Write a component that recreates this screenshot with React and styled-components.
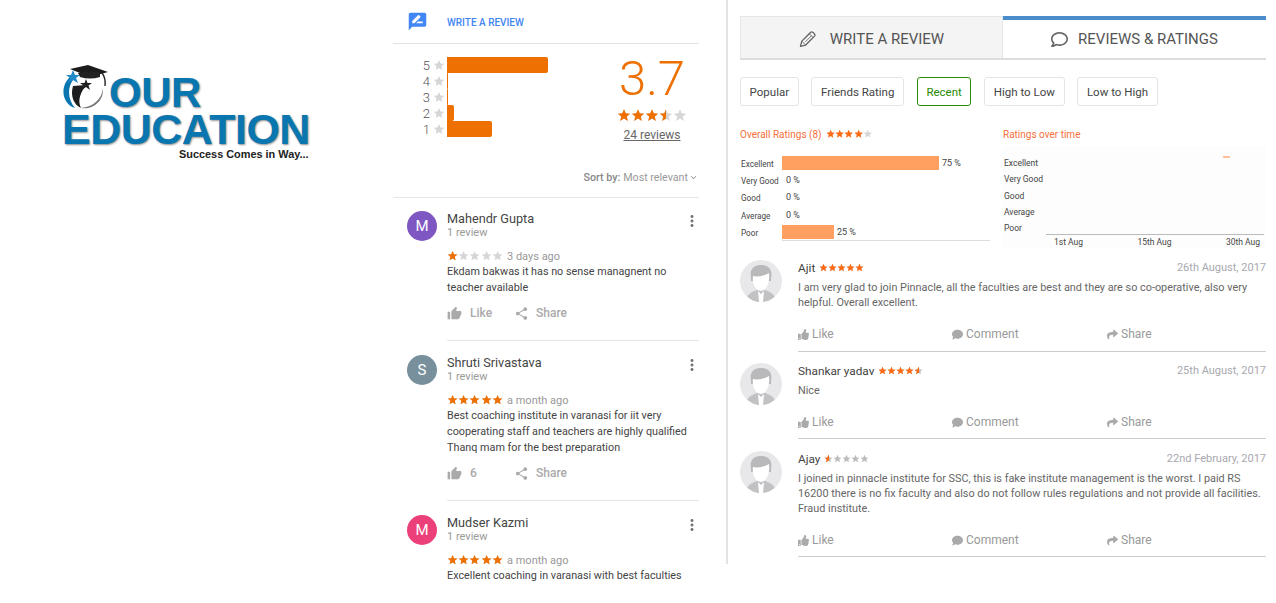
import React from "react";
import styled, { createGlobalStyle } from "styled-components";
import { MdRateReview, MdThumbUp, MdShare, MdMoreVert, MdExpandMore } from "react-icons/md";
import { FaThumbsUp, FaComment, FaShare, FaRegComment } from "react-icons/fa";

const GlobalStyle = createGlobalStyle`
  html, body {
    margin: 0;
    padding: 0;
    background: #fff;
    font-family: Roboto, "Liberation Sans", sans-serif;
    overflow: hidden;
  }
`;

const Page = styled.div`
  display: flex;
  align-items: flex-start;
  width: 1276px;
  height: 603px;
  overflow: hidden;
`;

// logo column
const LogoColumn = styled.div`
  width: 331px;
  padding: 64px 0 0 62px;
  flex-shrink: 0;
`;

const LogoTop = styled.div`
  display: flex;
  align-items: flex-end;
  height: 46px;
`;

const LogoWord = styled.div`
  font-family: "Liberation Sans", sans-serif;
  font-weight: 700;
  color: #0a76b0;
  line-height: ${(p) => p.$lh}px;
  font-size: ${(p) => p.$size}px;
  letter-spacing: ${(p) => p.$spacing}px;
  text-shadow: 1px 1px 2px rgba(0, 0, 0, 0.45);
`;

const LogoTag = styled.div`
  font-family: "Liberation Sans", sans-serif;
  font-weight: 700;
  font-size: 10.9px;
  line-height: 12px;
  color: #222;
  margin: 0 0 0 117px;
  white-space: nowrap;
`;

const LogoMark = () => (
  <svg width="47" height="46" viewBox="0 0 47 46">
    <path d="M8 5 L26 1 L46 8 L28 13 Z" fill="#1c1c1c" />
    <path d="M16 9 Q28 6 38 9 L38 13 Q28 16 18 13 Z" fill="#222" />
    <path d="M40 9 Q44 14 43 22" stroke="#222" strokeWidth="1.4" fill="none" />
    <path d="M9 12 C-3 22 0 40 13 44 C6 36 5 24 11 16 Z" fill="#0a76b0" />
    <path d="M11 22 C8 32 12 41 19 44 C15 36 19 28 24 21 Z" fill="#1d1d1d" />
    <path d="M19 44 C30 46 42 38 41 24 C40 35 31 43 19 44 Z" fill="#777" />
    <path d="M11 6 L13 11 L18 11 L14 14 L16 19 L11 16 L6 19 L8 14 L4 11 L9 11 Z" fill="#1f8ac8" />
    <path d="M24 15 L25.5 19 L30 19 L26.5 21.5 L28 26 L24 23 L20 26 L21.5 21.5 L18 19 L22.500 19 Z" fill="#222" />
  </svg>
);

// google reviews column
const GoogleColumn = styled.div`
  width: 306px;
  flex-shrink: 0;
`;

const WriteBar = styled.div`
  display: flex;
  align-items: center;
  height: 43px;
  border-bottom: 1px solid #e2e2e2;
  padding-left: 14px;
  gap: 19px;
  color: #4285f4;
  font-size: 10px;
  font-weight: 500;
  svg {
    margin-top: -1px;
  }
  span {
    padding-top: 2px;
  }
`;

const Summary = styled.div`
  height: 154px;
  border-bottom: 1px solid #e6e6e6;
  display: flex;
  flex-direction: column;
  padding-top: 13px;
  box-sizing: border-box;
`;

const SummaryTop = styled.div`
  display: flex;
  justify-content: space-between;
  padding-right: 12px;
`;

const Histogram = styled.div`
  display: flex;
  flex-direction: column;
`;

const HistRow = styled.div`
  display: flex;
  align-items: center;
  height: 16px;
`;

const HistNum = styled.span`
  width: 37px;
  text-align: right;
  font-size: 13px;
  color: #555;
  font-weight: 300;
`;

const HistStar = styled.span`
  display: flex;
  width: 17px;
  justify-content: center;
`;

const HistBar = styled.div`
  height: 16px;
  background: #ed7000;
  border-radius: 0 2px 2px 0;
`;

const Score = styled.div`
  display: flex;
  flex-direction: column;
  align-items: center;
  width: 70px;
`;

const ScoreNum = styled.div`
  font-size: 49px;
  line-height: 44px;
  font-weight: 300;
  color: #ed7000;
`;

const ScoreLink = styled.div`
  font-size: 12px;
  line-height: 14px;
  color: #666;
  text-decoration: underline;
  margin-top: 7px;
`;

const ScoreStars = styled.div`
  margin-top: 6px;
  height: 14px;
`;

const SortRow = styled.div`
  margin-top: auto;
  margin-bottom: 13px;
  display: flex;
  align-items: center;
  justify-content: flex-end;
  font-size: 10.7px;
  color: #999;
  white-space: nowrap;
  b {
    font-weight: 500;
    color: #888;
    margin-right: 3px;
  }
`;

const GList = styled.div`
  margin-top: -1px;
`;

const GItem = styled.div`
  display: flex;
  padding: 14px 0 0 14px;
  gap: 10px;
`;

const GAvatar = styled.div`
  width: 30px;
  height: 30px;
  border-radius: 50%;
  background: ${(p) => p.$bg};
  color: #fff;
  font-size: 15px;
  display: flex;
  align-items: center;
  justify-content: center;
  flex-shrink: 0;
`;

const GBody = styled.div`
  flex: 1;
  padding-bottom: 17px;
  border-bottom: ${(p) => (p.$last ? "none" : "1px solid #e6e6e6")};
`;

const GHead = styled.div`
  display: flex;
  justify-content: space-between;
`;

const GName = styled.div`
  font-size: 12.7px;
  line-height: 15px;
  color: #444;
`;

const GSub = styled.div`
  font-size: 11px;
  line-height: 13px;
  color: #999;
`;

const GMeta = styled.div`
  display: flex;
  align-items: center;
  gap: 4px;
  margin-top: 10px;
  height: 14px;
  font-size: 11px;
  color: #999;
`;

const GText = styled.div`
  font-size: 10.8px;
  line-height: 16px;
  color: #444;
  margin-top: 1px;
`;

const GActions = styled.div`
  display: flex;
  align-items: center;
  height: 20px;
  margin-top: 7px;
  font-size: 12px;
  font-weight: 500;
  color: #aaa;
`;

const GAction = styled.span`
  display: flex;
  align-items: center;
  gap: ${(p) => p.$gap}px;
  width: ${(p) => p.$w}px;
`;

const DotsButton = styled.span`
  display: flex;
  margin: 1px -2px 0 0;
  color: #757575;
`;

const Rule = styled.div`
  width: 2px;
  height: 564px;
  margin-left: 27px;
  background: #e2e2e2;
  flex-shrink: 0;
`;

// right column
const RightColumn = styled.div`
  width: 526px;
  margin: 16px 0 0 12px;
  flex-shrink: 0;
`;

const Tabs = styled.div`
  display: flex;
  height: 44px;
  border-bottom: 2px solid #ddd;
  box-sizing: border-box;
`;

const Tab = styled.div`
  width: 263px;
  display: flex;
  align-items: center;
  justify-content: center;
  gap: ${(p) => (p.$active ? 10 : 14)}px;
  font-size: 15px;
  color: #555;
  box-sizing: border-box;
  padding-top: ${(p) => (p.$active ? 0 : 2)}px;
  background: ${(p) => (p.$active ? "#fff" : "#f4f4f4")};
  border-top: ${(p) => (p.$active ? "4px solid #4a8bcb" : "1px solid #e6e6e6")};
  border-left: ${(p) => (p.$active ? "none" : "1px solid #e6e6e6")};
  border-right: ${(p) => (p.$active ? "none" : "1px solid #e6e6e6")};
  svg {
    color: #666;
  }
`;

const Chips = styled.div`
  display: flex;
  gap: 12.800px;
  margin-top: 17px;
`;

const Chip = styled.div`
  height: 29px;
  box-sizing: border-box;
  padding: 0 8.600px;
  display: flex;
  align-items: center;
  font-size: 11.5px;
  color: ${(p) => (p.$active ? "#2a8a00" : "#444")};
  border: 1px solid ${(p) => (p.$active ? "#2a8a00" : "#e4e4e4")};
  border-radius: 3px;
`;

const Charts = styled.div`
  display: flex;
  height: 121px;
  margin-top: 21px;
`;

const ChartBlock = styled.div`
  width: 263px;
  flex-shrink: 0;
`;

const ChartTitle = styled.div`
  display: flex;
  align-items: center;
  gap: 4px;
  height: 14px;
  font-size: 10px;
  color: #f5703c;
`;

const BarChart = styled.div`
  margin-top: 13px;
`;

const BarRow = styled.div`
  display: flex;
  align-items: center;
  height: 17.300px;
  font-size: 9px;
  color: #444;
`;

const BarLabel = styled.div`
  width: 42px;
  flex-shrink: 0;
  padding: 2px 0 0 1px;
  box-sizing: border-box;
  white-space: nowrap;
  font-size: 8.200px;
`;

const Bar = styled.div`
  height: 14px;
  background: #ff9f60;
  margin-right: 3px;
`;

const ZeroPct = styled.span`
  margin-left: 4px;
`;

const BarBase = styled.div`
  margin: 0 0 0 42px;
  width: 208px;
  border-top: 1px solid #ddd;
`;

const TimeChart = styled.div`
  display: flex;
  margin-top: 5px;
  height: 102px;
  background: #fdfdfd;
`;

const TimeLabels = styled.div`
  width: 43px;
  flex-shrink: 0;
  padding: 9px 0 0 1px;
  box-sizing: border-box;
  font-size: 8.500px;
  line-height: 16.300px;
  color: #444;
  white-space: nowrap;
`;

const TimePlot = styled.div`
  flex: 1;
  position: relative;
  display: flex;
  flex-direction: column;
`;

const TimeArea = styled.div`
  height: 88px;
  margin-right: 2px;
  border-bottom: 1px solid #bbb;
`;

const TimeMarker = styled.div`
  position: absolute;
  left: 177px;
  top: 10px;
  width: 7px;
  height: 2px;
  background: #ffc09a;
`;

const TimeTicks = styled.div`
  display: flex;
  justify-content: space-between;
  padding: 1px 6px 0 8px;
  font-size: 8.500px;
  line-height: 12px;
  color: #444;
`;

const RItem = styled.div`
  display: flex;
  gap: 16px;
  padding-top: ${(p) => p.$top}px;
`;

const PersonCircle = styled.div`
  flex-shrink: 0;
  width: 42px;
  height: 42px;
`;

const RBody = styled.div`
  flex: 1;
  border-bottom: 1px solid #ccc;
  padding-bottom: ${(p) => p.$bottom}px;
`;

const RHead = styled.div`
  display: flex;
  align-items: center;
  height: 15px;
`;

const RName = styled.span`
  font-size: 11.8px;
  color: #444;
  margin-right: 4px;
`;

const RDate = styled.span`
  margin-left: auto;
  font-size: 11px;
  color: #a8a8b0;
`;

const RText = styled.div`
  font-size: 10.850px;
  line-height: 15px;
  color: #666;
  margin-top: 5px;
  min-height: ${(p) => p.$min}px;
`;

const RActions = styled.div`
  display: flex;
  align-items: center;
  height: 16px;
  font-size: 12px;
  color: #999;
  svg {
    color: #aaa;
  }
`;

const RAction = styled.span`
  display: flex;
  align-items: center;
  gap: 3px;
  width: ${(p) => p.$w}px;
`;

// stars, the coloured layer is cut to the rating
const StarWrap = styled.span`
  position: relative;
  display: inline-flex;
  flex-shrink: 0;
  width: ${(p) => p.$w}px;
  height: ${(p) => p.$size}px;
`;

const StarLayer = styled.span`
  position: absolute;
  left: 0;
  top: 0;
  height: 100%;
  overflow: hidden;
  display: flex;
  color: ${(p) => p.$color};
`;

const StarGlyph = ({ size }) => (
  <svg width={size} height={size} viewBox="0 0 24 24" fill="currentColor" style={{ flexShrink: 0 }}>
    <path d="M12 2l3 7.100 7.600.6-5.800 5 1.800 7.400L12 18.200 5.400 22.100l1.800-7.400-5.800-5 7.600-.6z" />
  </svg>
);

const Stars = ({ value, count = 5, size = 11, color = "#ed7000", empty = "#d6d6d6" }) => {
  const glyphs = Array.from({ length: count }, (_, i) => <StarGlyph key={i} size={size} />);
  return (
    <StarWrap $size={size} $w={size * count}>
      <StarLayer $color={empty} style={{ width: "100%" }}>{glyphs}</StarLayer>
      <StarLayer $color={color} style={{ width: `${(value / count) * 100}%` }}>{glyphs}</StarLayer>
    </StarWrap>
  );
};

const PencilIcon = () => (
  <svg width="17" height="18" viewBox="0 0 24 24" fill="none" stroke="currentColor" strokeWidth="1.8" strokeLinejoin="round">
    <path d="M2 22.500 L4 15 L16.500 2.500 Q18 1.200 19.500 2.500 L22 5 Q23.200 6.500 22 8 L9.500 20.500 Z" />
    <path d="M14.500 4.500 L20 10 M4 15 L9.500 20.500 M6.500 13 L15.500 4 M9 16 L18 7 M11.500 18.500 L19.500 10.500" strokeWidth="1.2" />
  </svg>
);

const PersonIcon = () => (
  <PersonCircle>
    <svg width="42" height="42" viewBox="0 0 42 42">
      <defs>
        <clipPath id="personClip">
          <circle cx="21" cy="21" r="21" />
        </clipPath>
      </defs>
      <circle cx="21" cy="21" r="21" fill="#e8e8ea" />
      <g clipPath="url(#personClip)">
        <path d="M6 42 C6 34 12 32 17 30 L25 30 C30 32 36 34 36 42 Z" fill="#c2c2c4" />
        <path d="M18 31 L21 34 L24 31 L23 42 L19 42 Z" fill="#fff" />
        <path d="M11 18 C9 8 15 5 21 5 C28 5 33 9 31 18 L31 21 L11 21 Z" fill="#b9b9bb" />
        <path d="M13 16 C17 17 24 16 29 13 C30 20 28 30 21 31 C15 30 12 23 13 16 Z" fill="#fff" />
      </g>
    </svg>
  </PersonCircle>
);

const histogram = [
  { n: 5, w: 101 },
  { n: 4, w: 1 },
  { n: 3, w: 1 },
  { n: 2, w: 7 },
  { n: 1, w: 45 },
];

const googleReviews = [
  {
    name: "Mahendr Gupta",
    letter: "M",
    color: "#7e57c2",
    rating: 1,
    when: "3 days ago",
    text: ["Ekdam bakwas it has no sense managnent no", "teacher available"],
    like: "Like",
  },
  {
    name: "Shruti Srivastava",
    letter: "S",
    color: "#78909c",
    rating: 5,
    when: "a month ago",
    text: [
      "Best coaching institute in varanasi for iit very",
      "cooperating staff and teachers are highly qualified",
      "Thanq mam for the best preparation",
    ],
    like: "6",
  },
  {
    name: "Mudser Kazmi",
    letter: "M",
    color: "#ec407a",
    rating: 5,
    when: "a month ago",
    text: ["Excellent coaching in varanasi with best faculties"],
  },
];

const chips = ["Popular", "Friends Rating", "Recent", "High to Low", "Low to High"];

const bars = [
  { label: "Excellent", w: 157, pct: 75 },
  { label: "Very Good", w: 0, pct: 0 },
  { label: "Good", w: 0, pct: 0 },
  { label: "Average", w: 0, pct: 0 },
  { label: "Poor", w: 52, pct: 25 },
];

const reviews = [
  {
    name: "Ajit",
    rating: 5,
    date: "26th August, 2017",
    text: "I am very glad to join Pinnacle, all the faculties are best and they are so co-operative, also very helpful. Overall excellent.",
    min: 46,
    top: 12,
    bottom: 9,
  },
  {
    name: "Shankar yadav",
    rating: 4.5,
    date: "25th August, 2017",
    text: "Nice",
    min: 31,
    top: 11,
    bottom: 8,
  },
  {
    name: "Ajay",
    rating: 0.5,
    date: "22nd February, 2017",
    text: "I joined in pinnacle institute for SSC, this is fake institute management is the worst. I paid RS 16200 there is no fix faculty and also do not follow rules regulations and not provide all facilities. Fraud institute.",
    min: 61,
    top: 12,
    bottom: 8,
  },
];

const App = () => {
  return (
    <Page>
      <GlobalStyle />
      <LogoColumn>
        <LogoTop>
          <LogoMark />
          <LogoWord $size={42} $lh={34} $spacing={-0.5}>OUR</LogoWord>
        </LogoTop>
        <LogoWord $size={43} $lh={38} $spacing={-0.5}>EDUCATION</LogoWord>
        <LogoTag>Success Comes in Way...</LogoTag>
      </LogoColumn>

      <GoogleColumn>
        <WriteBar>
          <MdRateReview size={21} />
          <span>WRITE A REVIEW</span>
        </WriteBar>
        <Summary>
          <SummaryTop>
            <Histogram>
              {histogram.map((row) => (
                <HistRow key={row.n}>
                  <HistNum>{row.n}</HistNum>
                  <HistStar>
                    <Stars value={0} count={1} size={12} />
                  </HistStar>
                  <HistBar style={{ width: row.w }} />
                </HistRow>
              ))}
            </Histogram>
            <Score>
              <ScoreNum>3.7</ScoreNum>
              <ScoreStars>
                <Stars value={3.5} size={14} />
              </ScoreStars>
              <ScoreLink>24 reviews</ScoreLink>
            </Score>
          </SummaryTop>
          <SortRow>
            <b>Sort by:</b> Most relevant
            <MdExpandMore size={11} />
          </SortRow>
        </Summary>
        <GList>
          {googleReviews.map((r) => (
            <GItem key={r.name}>
              <GAvatar $bg={r.color}>{r.letter}</GAvatar>
              <GBody $last={!r.like}>
                <GHead>
                  <div>
                    <GName>{r.name}</GName>
                    <GSub>1 review</GSub>
                  </div>
                  <DotsButton>
                    <MdMoreVert size={18} />
                  </DotsButton>
                </GHead>
                <GMeta>
                  <Stars value={r.rating} size={11.2} />
                  <span>{r.when}</span>
                </GMeta>
                <GText>
                  {r.text.map((line) => (
                    <div key={line}>{line}</div>
                  ))}
                </GText>
                {r.like && (
                  <GActions>
                    <GAction $w={67} $gap={8}>
                      <MdThumbUp size={15} />
                      {r.like}
                    </GAction>
                    <GAction $w={70} $gap={7}>
                      <MdShare size={15} />
                      Share
                    </GAction>
                  </GActions>
                )}
              </GBody>
            </GItem>
          ))}
        </GList>
      </GoogleColumn>

      <Rule />

      <RightColumn>
        <Tabs>
          <Tab>
            <PencilIcon />
            WRITE A REVIEW
          </Tab>
          <Tab $active>
            <FaRegComment size={17} />
            REVIEWS &amp; RATINGS
          </Tab>
        </Tabs>
        <Chips>
          {chips.map((c) => (
            <Chip key={c} $active={c === "Recent"}>{c}</Chip>
          ))}
        </Chips>
        <Charts>
          <ChartBlock>
            <ChartTitle>
              Overall Ratings (8)
              <Stars value={4} size={9.400} color="#ff6a13" />
            </ChartTitle>
            <BarChart>
              {bars.map((b) => (
                <BarRow key={b.label}>
                  <BarLabel>{b.label}</BarLabel>
                  {b.w > 0 ? <Bar style={{ width: b.w }} /> : null}
                  {b.w > 0 ? <span>{b.pct} %</span> : <ZeroPct>{b.pct} %</ZeroPct>}
                </BarRow>
              ))}
              <BarBase />
            </BarChart>
          </ChartBlock>
          <ChartBlock>
            <ChartTitle>Ratings over time</ChartTitle>
            <TimeChart>
              <TimeLabels>
                {bars.map((b) => (
                  <div key={b.label}>{b.label}</div>
                ))}
              </TimeLabels>
              <TimePlot>
                <TimeArea />
                <TimeMarker />
                <TimeTicks>
                  <span>1st Aug</span>
                  <span>15th Aug</span>
                  <span>30th Aug</span>
                </TimeTicks>
              </TimePlot>
            </TimeChart>
          </ChartBlock>
        </Charts>
        {reviews.map((r) => (
          <RItem key={r.name} $top={r.top}>
            <PersonIcon />
            <RBody $bottom={r.bottom}>
              <RHead>
                <RName>{r.name}</RName>
                <Stars value={r.rating} size={9} color="#ff6a13" empty="#bbb" />
                <RDate>{r.date}</RDate>
              </RHead>
              <RText $min={r.min}>{r.text}</RText>
              <RActions>
                <RAction $w={154}>
                  <FaThumbsUp size={11} />
                  Like
                </RAction>
                <RAction $w={155}>
                  <FaComment size={11} />
                  Comment
                </RAction>
                <RAction $w={80}>
                  <FaShare size={11} />
                  Share
                </RAction>
              </RActions>
            </RBody>
          </RItem>
        ))}
      </RightColumn>
    </Page>
  );
};

export default App;
